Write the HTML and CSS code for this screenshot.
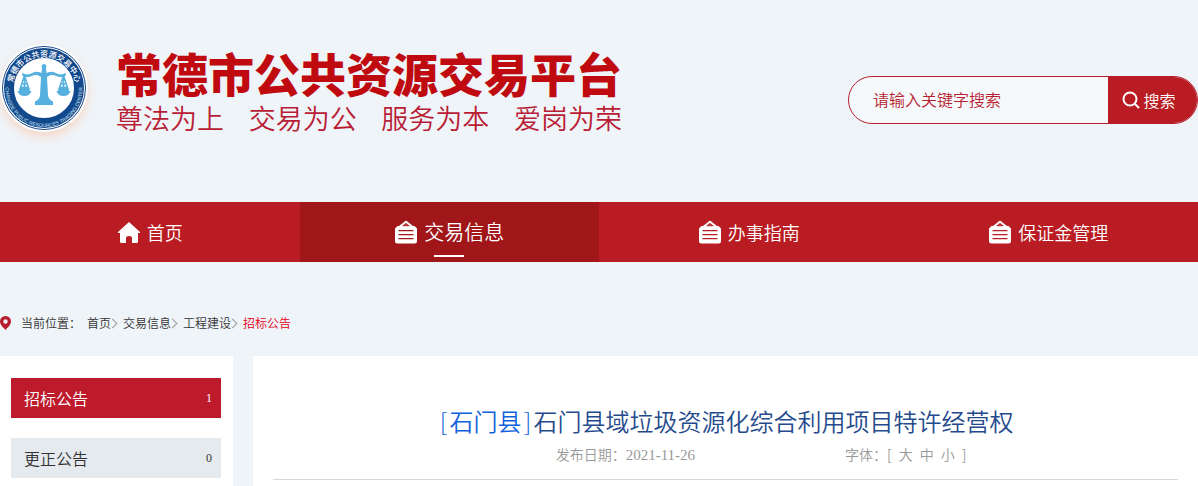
FILE: index.html
```html
<!DOCTYPE html>
<html lang="zh-CN">
<head>
<meta charset="utf-8">
<meta name="viewport" content="width=device-width, initial-scale=1">
<title>常德市公共资源交易平台</title>
<link rel="stylesheet" href="styles.css">
</head>
<body>
<svg class="defs" aria-hidden="true">
  <symbol id="board" viewBox="0 0 24 24">
    <path fill="none" stroke="currentColor" stroke-width="2" d="M4 8 12 1.8 20 8"/>
    <path fill="currentColor" fill-rule="evenodd" d="M3.500 6h17L23 8.500V21a2.500 2.500 0 0 1-2.500 2.500h-17A2.500 2.500 0 0 1 1 21V8.500zM4.500 10v1.200h15V10zM4.500 14v1.200h15V14zM4.500 18v1.200h15V18z"/>
    <path fill="#bf3a40" d="M8.500 6.300 12 3.600l3.500 2.700z"/>
  </symbol>
</svg>
<header class="header">
  <a class="brand" href="#">
    <svg class="logo" viewBox="0 0 176 176" role="img" aria-label="常德市公共资源交易中心">
      <defs>
        <path id="arc-top" d="M34 121A63 63 0 1 1 142 121"/>
        <path id="arc-bottom" d="M19 55A77 77 0 1 0 157 55"/>
        <g id="pan">
          <path fill="none" stroke="#55b0df" stroke-width="3" d="M0 0-10 30M0 0 10 30M0 0V30M-5 17H5"/>
          <path d="M-8 22H8L10 31H-10zM-14 31H14Q11 41 0 41T-14 31z"/>
        </g>
      </defs>
      <circle cx="88" cy="88" r="88" fill="#fff"/>
      <circle cx="88" cy="88" r="83" fill="none" stroke="#174b8b" stroke-width="2"/>
      <circle cx="88" cy="88" r="70" fill="none" stroke="#12488c" stroke-width="20"/>
      <g fill="#55b0df">
        <path d="M84 48a5 5 0 1 1 8 0l1 10q11-5 21 1 8 4 17-1l1 5q-10 6-20 1-10-5-18 2l2 37q1 8 10 12v7H70v-7q9-4 10-12l2-37q-8-7-18-2-10 5-20-1l1-5q9 5 17 1 10-6 21-1z"/>
        <use href="#pan" x="49" y="63"/>
        <use href="#pan" x="127" y="63"/>
      </g>
      <text class="seal-cn"><textPath href="#arc-top" startOffset="50%">常德市公共资源交易中心</textPath></text>
      <text class="seal-en"><textPath href="#arc-bottom" startOffset="50%">CHANGDE PUBLIC RESOURCES TRADING CENTER</textPath></text>
    </svg>
    <span class="brand-text">
      <span class="site-name">常德市公共资源交易平台</span>
      <span class="slogan"><span>尊法为上</span><span>交易为公</span><span>服务为本</span><span>爱岗为荣</span></span>
    </span>
  </a>
  <form class="search">
    <input class="search-input" type="text" placeholder="请输入关键字搜索" aria-label="请输入关键字搜索">
    <button class="search-button" type="button">
      <svg class="search-icon" viewBox="0 0 18 18" aria-hidden="true"><circle cx="8" cy="8" r="6.500"/><path d="m13 13 4 4"/></svg>搜索
    </button>
  </form>
</header>
<nav class="nav">
  <a class="nav-item" href="#"><svg class="nav-icon" viewBox="0 0 24 24" aria-hidden="true"><path fill="currentColor" d="M12 2 23 12q.6 1-.6 1H21v8.500q0 1.500-1.500 1.500H15v-5q0-2-3-2t-3 2v5H4.500Q3 23 3 21.500V13H1.600Q.4 13 1 12z"/></svg>首页</a>
  <a class="nav-item active" href="#"><svg class="nav-icon" aria-hidden="true"><use href="#board"/></svg>交易信息</a>
  <a class="nav-item" href="#"><svg class="nav-icon" aria-hidden="true"><use href="#board"/></svg>办事指南</a>
  <a class="nav-item" href="#"><svg class="nav-icon" aria-hidden="true"><use href="#board"/></svg>保证金管理</a>
</nav>
<div class="crumbs">
  <svg class="pin" viewBox="0 0 11 14" aria-hidden="true"><path fill="#b71c2b" fill-rule="evenodd" d="M5.500 0A5.500 5.500 0 0 1 11 5.500C11 9 7.500 11.500 5.500 14 3.500 11.500 0 9 0 5.500A5.500 5.500 0 0 1 5.500 0zm0 3.300a2.200 2.200 0 1 0 0 4.400 2.200 2.200 0 0 0 0-4.400z"/></svg>
  <span class="crumb-label">当前位置：</span>
  <a class="crumb" href="#">首页</a>
  <a class="crumb" href="#">交易信息</a>
  <a class="crumb" href="#">工程建设</a>
  <a class="crumb current" href="#">招标公告</a>
</div>
<div class="content">
  <aside class="sidebar">
    <a class="side-item selected" href="#"><span>招标公告</span><span class="count">1</span></a>
    <a class="side-item" href="#"><span>更正公告</span><span class="count">0</span></a>
  </aside>
  <main class="article">
    <h1 class="title"><span class="region"><span class="bracket">[</span>石门县<span class="bracket">]</span></span>石门县域垃圾资源化综合利用项目特许经营权</h1>
    <div class="meta">
      <span>发布日期：<span class="date">2021-11-26</span></span>
      <span class="font-size"><span>字体：</span><span>[</span><a href="#">大</a><a href="#">中</a><a href="#">小</a><span>]</span></span>
    </div>
  </main>
</div>
</body>
</html>
```
FILE: styles.css
```css
* { box-sizing: border-box; }
body {
  margin: 0;
  min-height: 100vh;
  display: flex;
  flex-direction: column;
  background: #eff4f9;
  color: #333;
  font: 350 12px/20px "Noto Sans CJK SC", sans-serif;
}
a { color: inherit; text-decoration: none; }
.defs { position: absolute; width: 0; height: 0; }

.header {
  display: flex;
  justify-content: space-between;
  align-items: center;
  padding: 44px 0 61px;
}
.brand { display: flex; align-items: flex-start; gap: 28px; }
.logo {
  width: 88px;
  height: 88px;
  border-radius: 50%;
  box-shadow: 0 5px 10px #f7d9c9;
}
.seal-cn, .seal-en { fill: #fff; text-anchor: middle; }
.seal-cn { font-size: 16px; font-weight: 500; }
.seal-en { font-family: "Liberation Sans", sans-serif; font-size: 10px; fill: #cde6f5; }
.brand-text { display: flex; flex-direction: column; padding-top: 5px; }
.site-name { color: #bf0a10; font-size: 46px; font-weight: 900; line-height: 46px; }
.slogan {
  display: flex;
  justify-content: space-between;
  color: #b91d35;
  font-size: 27px;
  line-height: 46px;
}

.search {
  display: flex;
  width: 350px;
  height: 48px;
  margin-top: 15px;
  border: 1px solid #b71f31;
  border-radius: 24px;
  overflow: hidden;
  background: #f6f9fc;
}
.search-input {
  flex: 1;
  min-width: 0;
  padding: 0 24px 2px;
  border: 0;
  outline: 0;
  background: transparent;
  color: #b71f31;
  font: inherit;
  font-size: 16px;
}
.search-input::placeholder { color: #b71f31; opacity: 1; }
.search-button {
  display: flex;
  align-items: center;
  justify-content: center;
  gap: 3px;
  width: 89px;
  padding: 0 7px 0 0;
  border: 0;
  background: #b91c22;
  color: #fff;
  font: inherit;
  font-size: 16px;
}
.search-icon { width: 18px; height: 18px; fill: none; stroke: currentColor; stroke-width: 2; }

.nav {
  display: grid;
  grid-template-columns: repeat(4, 1fr);
  background: #b91c22;
  color: #fff;
}
.nav-item {
  position: relative;
  display: flex;
  align-items: center;
  justify-content: center;
  gap: 6px;
  height: 60px;
  padding-bottom: 1px;
  font-size: 18px;
}
.nav-item.active { background: #a11619; font-size: 20px; }
.nav-item.active::after {
  content: "";
  position: absolute;
  bottom: 5px;
  left: 50%;
  width: 30px;
  height: 2px;
  margin-left: -15px;
  background: #fff;
}
.nav-icon { width: 24px; height: 24px; }

.crumbs { display: flex; align-items: center; padding: 51px 0 23px; }
.pin { width: 11px; height: 14px; margin-right: 10px; }
.crumb-label { margin-right: 6px; }
.crumb { display: flex; align-items: center; }
.crumb:not(.current)::after {
  content: "";
  width: 6px;
  height: 6px;
  margin: 0 7px 0 -2px;
  border: solid #999;
  border-width: 1px 1px 0 0;
  transform: rotate(45deg);
}
.current { color: #e60012; }

.content { flex: 1; display: flex; gap: 20px; }
.sidebar {
  display: flex;
  flex-direction: column;
  gap: 20px;
  width: 233px;
  padding: 22px 12px 0 11px;
  background: #fff;
}
.side-item {
  display: flex;
  align-items: center;
  justify-content: space-between;
  height: 40px;
  padding: 0 9px 0 13px;
  background: #e5eaef;
  font-size: 16px;
}
.side-item.selected { background: #bd1a2c; color: #fff; }
.count { font: 12px/20px "Liberation Serif", serif; }
.article { flex: 1; min-width: 0; padding: 45px 20px 0; background: #fff; }
.title {
  margin: 0;
  color: #254a8c;
  font-size: 24px;
  font-weight: 350;
  line-height: 40px;
  text-align: center;
}
.region { color: #0f61dc; }
.bracket { display: inline-block; width: 12px; font-weight: 300; text-align: center; }
.meta {
  display: flex;
  justify-content: center;
  gap: 150px;
  padding: 3px 0 14px 71px;
  border-bottom: 1px solid #d8d8d8;
  color: #999;
  font-size: 14px;
}
.date { font-family: "Liberation Serif", serif; font-size: 15px; }
.font-size { display: flex; gap: 7px; }
.font-size > :first-child { margin-right: -7px; }
```
